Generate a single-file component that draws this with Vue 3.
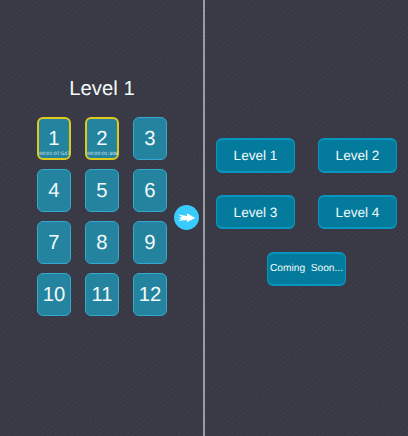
<script setup>
const tiles = Array.from({ length: 12 }, (_, i) => ({ n: i + 1 }))
tiles[0].time = '00:01:07:547'
tiles[1].time = '00:00:01:308'
const levels = [1, 2, 3, 4]
</script>

<template>
  <main class="screen">
    <section class="stages">
      <h1 class="title">Level 1</h1>
      <div class="grid">
        <button v-for="t in tiles" :key="t.n" class="tile" :class="{ done: t.time }">
          <span class="num">{{ t.n }}</span>
          <svg v-if="t.time" class="time" viewBox="0 0 31 6">
            <text x="0.3" y="4" textLength="30.4" lengthAdjust="spacing">{{ t.time }}</text>
          </svg>
        </button>
      </div>
      <button class="next">
        <svg viewBox="0 0 25 25">
          <path d="M4 9.6 L13 10.9 L13 8.3 L21.2 12.9 L13 17.3 L13 15.1 L3.8 15.9 L7.8 13.9 L4.4 12.9 L8 11.9 Z" fill="#fff" />
        </svg>
      </button>
    </section>
    <section class="levels">
      <div class="level-grid">
        <button v-for="l in levels" :key="l" class="level">Level {{ l }}</button>
      </div>
      <button class="level soon">Coming&nbsp; Soon...</button>
    </section>
  </main>
</template>

<style>
body { margin: 0; background: #3b3a47; }
</style>

<style scoped>
.screen {
  display: flex;
  width: 408px;
  height: 436px;
  overflow: hidden;
  font-family: "Liberation Sans", Arial, sans-serif;
  text-rendering: geometricPrecision;
  color: #f2fafa;
  background-color: #3c3b48;
  background-image:
    repeating-linear-gradient(32deg, rgba(20, 20, 32, 0.09) 0 1px, transparent 1px 3px),
    repeating-linear-gradient(-38deg, rgba(20, 20, 32, 0.07) 0 1px, transparent 1px 4px);
}
button {
  box-sizing: border-box;
  margin: 0;
  padding: 0;
  font-family: inherit;
  color: inherit;
  text-rendering: inherit;
}
.stages {
  position: relative;
  box-sizing: border-box;
  width: 205px;
  padding: 77px 0 0 37px;
  border-right: 2px solid #9b9ba2;
}
.title {
  width: 130px;
  margin: 0 0 16px;
  font-size: 20.3px;
  line-height: 24px;
  font-weight: 400;
  text-align: center;
}
.grid {
  display: grid;
  grid-template-columns: repeat(3, 34px);
  grid-auto-rows: 43px;
  gap: 9px 14px;
}
.tile {
  display: flex;
  flex-direction: column;
  align-items: center;
  border: 1px solid #33a9cf;
  border-radius: 6px;
  background: #24839f;
}
.tile.done {
  border: 2px solid #dfc91b;
}
.num {
  margin-top: 10px;
  font-size: 20.3px;
  line-height: 23px;
}
.done .num { margin-top: 9px; }
.time {
  display: block;
  flex: none;
  width: 31px;
  height: 6px;
  margin: 0 -1px;
  font-size: 4.8px;
  overflow: visible;
}
.time text {
  fill: #e4f3f5;
}
.next {
  position: absolute;
  left: 174px;
  top: 205px;
  width: 25px;
  height: 25px;
  border: 0;
  border-radius: 50%;
  background: #38cbfc;
}
.next svg { display: block; width: 25px; height: 25px; }
.levels {
  display: flex;
  flex-direction: column;
  align-items: center;
  flex: 1;
  gap: 23px;
  padding: 138px 0 0 0;
}
.level-grid {
  display: grid;
  grid-template-columns: repeat(2, 79px);
  gap: 22px 23px;
}
.level {
  width: 79px;
  height: 34px;
  border: 2px solid #0796bf;
  border-left-width: 1px;
  border-right-width: 1px;
  border-radius: 6px;
  background: #047b9d;
  font-size: 13.6px;
  line-height: 31px;
  text-align: center;
}
.level-grid .level:nth-child(-n + 2) {
  height: 35px;
}
.soon {
  font-size: 10.2px;
  line-height: 30px;
  white-space: nowrap;
}
</style>
